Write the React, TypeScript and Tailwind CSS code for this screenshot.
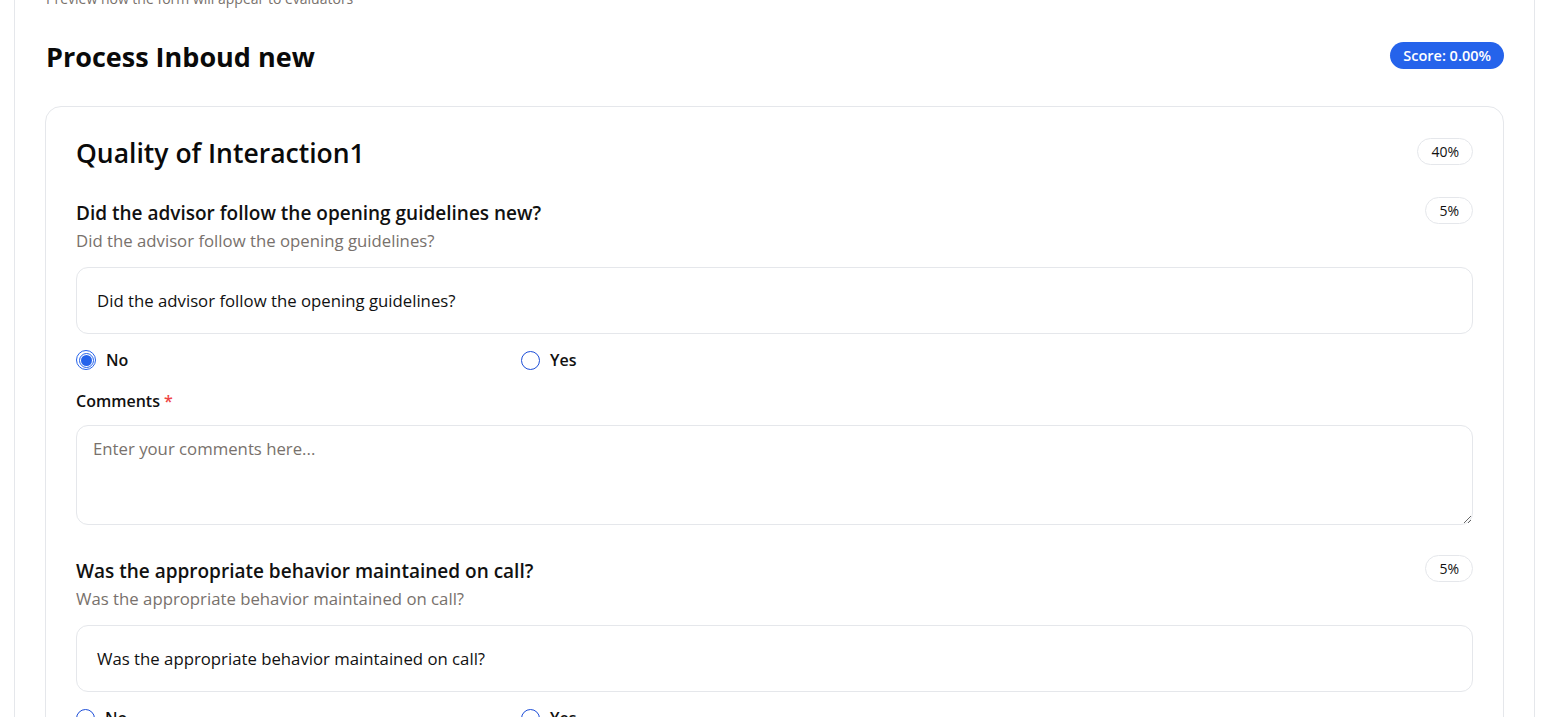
import React from "react"

const font = "font-['Segoe_UI','Open_Sans','Liberation_Sans',sans-serif]"

type Question = {
  title: string
  description: string
  prompt: string
  weight: string
  selected?: "No" | "Yes"
}

const questions: Question[] = [
  {
    title: "Did the advisor follow the opening guidelines new?",
    description: "Did the advisor follow the opening guidelines?",
    prompt: "Did the advisor follow the opening guidelines?",
    weight: "5%",
    selected: "No",
  },
  {
    title: "Was the appropriate behavior maintained on call?",
    description: "Was the appropriate behavior maintained on call?",
    prompt: "Was the appropriate behavior maintained on call?",
    weight: "5%",
  },
]

function Pill({ children }: { children: React.ReactNode }) {
  return (
    <span className="inline-flex h-[27px] items-center rounded-full border border-[#e5e7eb] px-[13px] text-[14px] text-[#111]">
      {children}
    </span>
  )
}

function Radio({ label, checked }: { label: string; checked?: boolean }) {
  return (
    <label className="flex items-center gap-[10px] text-[16px] font-semibold text-[#111]">
      {checked ? (
        <span className="flex h-[20px] w-[20px] items-center justify-center rounded-full border-[1.5px] border-[#2563eb]">
          <span className="flex h-[15px] w-[15px] items-center justify-center rounded-full border border-[#2563eb] bg-white">
            <span className="h-[11px] w-[11px] rounded-full bg-[#2563eb]" />
          </span>
        </span>
      ) : (
        <span className="h-[19px] w-[19px] rounded-full border border-[#1d4ed8]" />
      )}
      {label}
    </label>
  )
}

function QuestionBlock({ q }: { q: Question }) {
  return (
    <div className="mb-[32px]">
      <div className="flex items-start justify-between">
        <div>
          <h3 className="text-[19px] leading-[28px] font-semibold text-[#111]">{q.title}</h3>
          <p className="mt-[2px] text-[16.75px] leading-[24px] text-[#78716c]">{q.description}</p>
        </div>
        <div className="-mt-[2px]">
          <Pill>{q.weight}</Pill>
        </div>
      </div>
      <div className="mt-[14px] rounded-[12px] border border-[#e5e7eb] px-[20px] py-[20px] text-[16.75px] leading-[25px] text-[#111]">
        {q.prompt}
      </div>
      <div className="mt-[14px] grid grid-cols-[445px_1fr]">
        <Radio label="No" checked={q.selected === "No"} />
        <Radio label="Yes" checked={q.selected === "Yes"} />
      </div>
      <div className="mt-[17px] text-[16px] leading-[24px] font-semibold text-[#111]">
        Comments <span className="text-[#ef4444]">*</span>
      </div>
      <textarea
        className="mt-[12px] block h-[100px] w-full rounded-[12px] border border-[#e5e7eb] px-[16px] py-[11px] text-[16.75px] leading-[24px] text-[#111] outline-none placeholder:text-[#78716c]"
        placeholder="Enter your comments here..."
      />
    </div>
  )
}

export default function App() {
  return (
    <div className={`h-[717px] overflow-hidden bg-white ${font}`}>
      <div className="ml-[14px] mr-[25px] -mt-[25px] rounded-xl border border-[#e5e7eb] px-[30px] pt-[13px] pb-10">
        <p className="pl-px text-[14px] leading-[20px] text-[#78716c]">Preview how the form will appear to evaluators</p>

        <div className="mt-[30px] flex items-center justify-between pl-px">
          <h1 className="text-[27px] leading-[36px] font-bold text-[#0a0a0a]">Process Inboud new</h1>
          <span className="-mt-[3px] inline-flex h-[27px] items-center rounded-full bg-[#2563eb] px-[13px] text-[14.5px] font-semibold text-white">
            Score: 0.00%
          </span>
        </div>

        <div className="mt-[31px] rounded-[16px] border border-[#e5e7eb] px-[30px] pt-[28px]">
          <div className="flex items-center justify-between">
            <h2 className="text-[26.5px] leading-[36px] font-semibold text-[#0a0a0a]">Quality of Interaction1</h2>
            <div className="-mt-[3px]">
              <Pill>40%</Pill>
            </div>
          </div>
          <div className="mt-[28px]">
            {questions.map((q) => (
              <QuestionBlock key={q.title} q={q} />
            ))}
          </div>
        </div>
      </div>
    </div>
  )
}
